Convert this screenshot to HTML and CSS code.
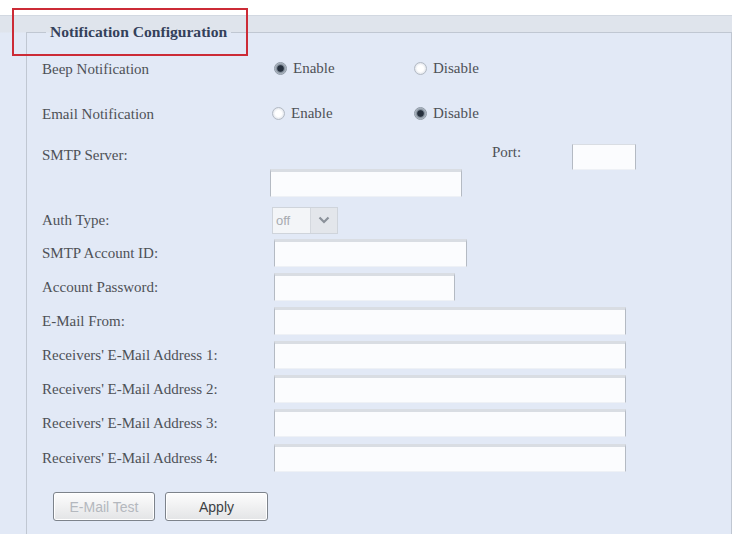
FILE: index.html
```html
<!DOCTYPE html>
<html>
<head>
<meta charset="utf-8">
<link rel="stylesheet" href="styles.css">
</head>
<body>
<div class="page">
  <div class="panel">
    <fieldset class="config">
      <legend>Notification Configuration</legend>

      <div class="row r-radio">
        <div class="lbl">Beep Notification</div>
        <div class="ctl">
          <label class="opt"><span class="radio on"></span>Enable</label>
          <label class="opt"><span class="radio"></span>Disable</label>
        </div>
      </div>

      <div class="row r-radio">
        <div class="lbl">Email Notification</div>
        <div class="ctl">
          <label class="opt opt-b"><span class="radio"></span>Enable</label>
          <label class="opt"><span class="radio on"></span>Disable</label>
        </div>
      </div>

      <div class="row r-smtp">
        <div class="lbl lbl-top">SMTP Server:</div>
        <div class="ctl ctl-stack">
          <div class="port-line">
            <span class="port-lbl">Port:</span>
            <span class="field f-port"></span>
          </div>
          <span class="field f-server"></span>
        </div>
      </div>

      <div class="row r-auth">
        <div class="lbl">Auth Type:</div>
        <div class="ctl">
          <div class="select">
            <span class="sel-val">off</span>
            <span class="sel-btn">
              <svg width="12" height="8" viewBox="0 0 12 8"><path d="M1.5 1.5 L6 6 L10.5 1.5" fill="none" stroke="#8b919a" stroke-width="2.2"/></svg>
            </span>
          </div>
        </div>
      </div>

      <div class="row r-in">
        <div class="lbl">SMTP Account ID:</div>
        <div class="ctl"><span class="field f-id"></span></div>
      </div>
      <div class="row r-in">
        <div class="lbl">Account Password:</div>
        <div class="ctl"><span class="field f-pw"></span></div>
      </div>
      <div class="row r-in">
        <div class="lbl">E-Mail From:</div>
        <div class="ctl"><span class="field f-long"></span></div>
      </div>
      <div class="row r-in">
        <div class="lbl">Receivers' E-Mail Address 1:</div>
        <div class="ctl"><span class="field f-long"></span></div>
      </div>
      <div class="row r-in">
        <div class="lbl">Receivers' E-Mail Address 2:</div>
        <div class="ctl"><span class="field f-long"></span></div>
      </div>
      <div class="row r-in">
        <div class="lbl">Receivers' E-Mail Address 3:</div>
        <div class="ctl"><span class="field f-long"></span></div>
      </div>
      <div class="row r-in r-last">
        <div class="lbl">Receivers' E-Mail Address 4:</div>
        <div class="ctl"><span class="field f-long"></span></div>
      </div>

      <div class="buttons">
        <button class="btn btn-dis">E-Mail Test</button>
        <button class="btn">Apply</button>
      </div>
    </fieldset>
  </div>
  <div class="annot"></div>
</div>
</body>
</html>
```
FILE: styles.css
```css
html, body {
  margin: 0;
  padding: 0;
  background: #ffffff;
}
.page {
  position: relative;
  width: 734px;
  height: 534px;
  overflow: hidden;
  font-family: "Liberation Serif", "Times New Roman", serif;
  font-size: 15px;
  color: #4e5157;
}
.panel {
  margin-top: 15px;
  width: 732px;
  height: 519px;
  box-sizing: border-box;
  border-top: 1px solid #d2d8e1;
  padding-top: 6px;
  background: linear-gradient(#dfe4ec 0, #dfe4ec 16px, #e2e9f6 17px);
}
.config {
  margin: 0 0 0 26px;
  padding: 4px 0 0 15px;
  border: 1px solid #c0c7d2;
  border-bottom: none;
  height: 520px;
  box-sizing: border-box;
  min-width: 0;
}
.config legend {
  margin-left: 4px;
  padding: 0 4px;
  font-weight: bold;
  font-size: 15.6px;
  line-height: 20px;
  color: #34415b;
}
.row {
  display: flex;
  align-items: center;
}
.lbl {
  width: 228px;
  flex: none;
  line-height: 18px;
}
.ctl {
  display: flex;
  align-items: center;
  flex: 1;
}
.r-radio { height: 45px; }
.r-smtp { height: 68px; align-items: flex-start; }
.lbl-top { padding-top: 10px; }
.ctl-stack { flex-direction: column; align-items: flex-start; }
.port-line {
  display: flex;
  align-items: flex-start;
  height: 33px;
  padding-left: 222px;
}
.port-lbl {
  width: 80px;
  padding-top: 7px;
  line-height: 18px;
}
.r-auth { height: 32px; }
.r-in { height: 34px; }
.r-last { height: 36px; }

.opt {
  display: flex;
  align-items: center;
  width: 136px;
  margin-left: 4px;
}
.opt-b { margin-left: 2px; width: 138px; }
.radio {
  width: 13px;
  height: 13px;
  border-radius: 50%;
  box-sizing: border-box;
  border: 1px solid #b3bac4;
  background: radial-gradient(circle, #ffffff 0, #ffffff 3px, #dfe3ea 6px);
  margin-right: 6px;
}
.radio.on {
  border-color: #8f9aa6;
  background: radial-gradient(circle, #26303d 0, #26303d 2.8px, #7f8b98 3.8px, #c8cfd8 6px);
}

.field {
  display: block;
  height: 28px;
  box-sizing: border-box;
  background: #fbfcfe;
  border-top: 3px solid #d9dde3;
  border-left: 1px solid #b4bac3;
  border-right: 1px solid #b4bac3;
  border-bottom: 1px solid #eef1f6;
}
.f-port { width: 64px; height: 26px; margin-top: 8px; border-top-width: 1px; }
.f-server { width: 192px; }
.f-id { width: 193px; margin-left: 4px; }
.f-pw { width: 181px; margin-left: 4px; }
.f-long { width: 352px; margin-left: 4px; }

.select {
  display: flex;
  width: 66px;
  height: 27px;
  margin-left: 2px;
  box-sizing: border-box;
  border: 1px solid #cfd4db;
  background: #f3f5f8;
}
.sel-val {
  flex: 1;
  font-family: "Liberation Sans", Arial, sans-serif;
  font-size: 13px;
  color: #a7abb1;
  line-height: 25px;
  padding-left: 3px;
}
.sel-btn {
  width: 26px;
  display: flex;
  align-items: center;
  justify-content: center;
  background: #e3e6eb;
  border-left: 1px solid #d4d8de;
}

.buttons {
  display: flex;
  gap: 10px;
  margin-top: 16px;
  margin-left: 11px;
}
.btn {
  width: 102px;
  height: 29px;
  box-sizing: border-box;
  border: 1px solid #7d838b;
  border-radius: 3px;
  background: linear-gradient(#fdfdfd, #e3e4e6);
  box-shadow: inset 0 0 0 1px #ffffff;
  font-family: "Liberation Sans", Arial, sans-serif;
  font-size: 14px;
  color: #3c3f44;
  padding: 0;
}
.btn + .btn { width: 103px; }
.btn-dis { color: #b4b8be; }

.annot {
  position: absolute;
  left: 12px;
  top: 8px;
  width: 236px;
  height: 48px;
  box-sizing: border-box;
  border: 2px solid #cc2b36;
}
```
